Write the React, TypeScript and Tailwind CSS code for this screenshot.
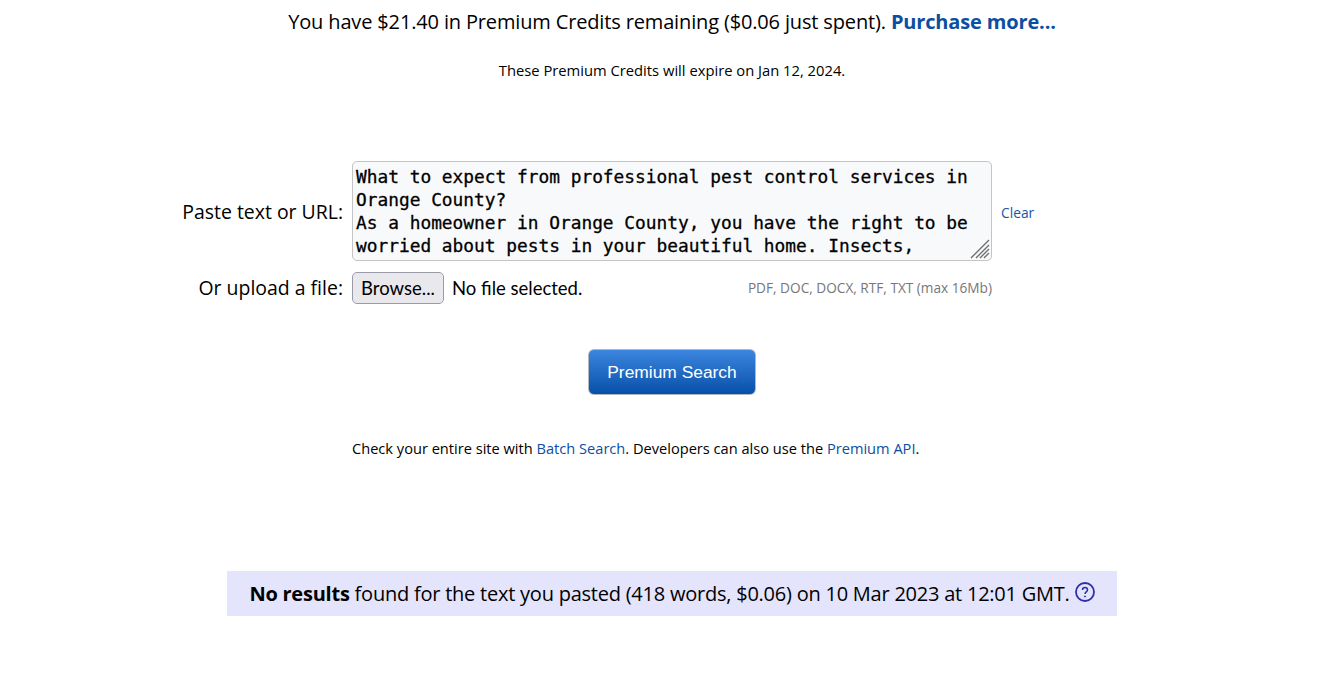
export default function App() {
  return (
    <div className="min-h-[681px] bg-white text-black font-['Open_Sans',sans-serif] overflow-hidden">
      {/* Credits */}
      <div className="pl-[14px] pt-[8px] text-center">
        <p className="text-[20px] leading-[28px] tracking-[-0.15px]">
          You have $21.40 in Premium Credits remaining ($0.06 just spent).{" "}
          <a className="font-bold text-[#0b4ea2]">Purchase more...</a>
        </p>
        <p className="mt-[24px] text-[14.75px] leading-[20px]">These Premium Credits will expire on Jan 12, 2024.</p>
      </div>

      {/* Search form */}
      <div className="mt-[81px] grid grid-cols-[352px_640px_1fr]">
        <label className="self-center pr-[9px] pt-[2px] text-right text-[19.45px] leading-[24px]">Paste text or URL:</label>
        <div className="relative h-[100px] rounded-[5px] border border-[#c4c4c4] bg-[#f8f9fb] px-[3px] py-[3px] font-['DejaVu_Sans_Mono',monospace] text-[17.83px] font-medium leading-[23px] text-black whitespace-pre overflow-hidden [-webkit-text-stroke:0.3px_black]">
          {"What to expect from professional pest control services in\nOrange County?\nAs a homeowner in Orange County, you have the right to be\nworried about pests in your beautiful home. Insects,"}
          <svg className="absolute bottom-[1px] right-[1px]" width="20" height="20" viewBox="0 0 20 20" fill="none" stroke="#6f6f6f" strokeWidth="1.4">
            <path d="M1 19 19 1M6 19 19 6M10 19l9-9M14 19l5-5" />
          </svg>
        </div>
        <a className="self-center pl-[9px] pt-[4px] text-[13.8px] text-[#1358a8]">Clear</a>

        <label className="mt-[11px] self-center pr-[9px] text-right text-[19.45px] leading-[24px]">Or upload a file:</label>
        <div className="mt-[11px] flex items-center justify-between">
          <div className="flex items-center gap-[8px] font-['Lato',sans-serif] text-[18.5px]">
            <span className="flex h-[32px] w-[92px] items-center justify-center rounded-[5px] border border-[#9b9ba8] bg-[#e9e9ed] pt-[1px]">Browse...</span>
            <span className="pt-[1px]">No file selected.</span>
          </div>
          <span className="text-[13.65px] text-[#777]">PDF, DOC, DOCX, RTF, TXT (max 16Mb)</span>
        </div>
        <div />
      </div>

      <div className="mt-[45px] flex justify-center pl-[14px]">
        <button className="h-[46px] w-[168px] rounded-[6px] border border-[#b0b8c4] bg-gradient-to-b from-[#3b86e0] to-[#0450a8] pt-[1px] font-['Liberation_Sans',sans-serif] text-[17.4px] text-white">
          Premium Search
        </button>
      </div>

      <p className="mt-[43px] pl-[352px] text-[14.62px] leading-[20px]">
        Check your entire site with <a className="text-[#0b4ea2]">Batch Search</a>. Developers can also use the{" "}
        <a className="text-[#0b4ea2]">Premium API</a>.
      </p>

      {/* Results */}
      <div className="mt-[113px] ml-[227px] flex h-[45px] w-[890px] items-center justify-center gap-[5px] bg-[#e4e4fc] text-[20px]">
        <span className="tracking-[-0.23px]">
          <b>No results</b> found for the text you pasted (418 words, $0.06) on 10 Mar 2023 at 12:01 GMT.
        </span>
        <svg width="20" height="20" viewBox="0 0 20 20" fill="none" stroke="#2f2fa8" className="mb-[3px]">
          <circle cx="10" cy="10" r="9" strokeWidth="1.8" />
          <path d="M7.5 8c0-3.2 5-3.2 5 0 0 2-2.5 1.8-2.5 4" strokeWidth="1.5" />
          <circle cx="10" cy="14.5" r="0.6" fill="#2f2fa8" />
        </svg>
      </div>
    </div>
  )
}
